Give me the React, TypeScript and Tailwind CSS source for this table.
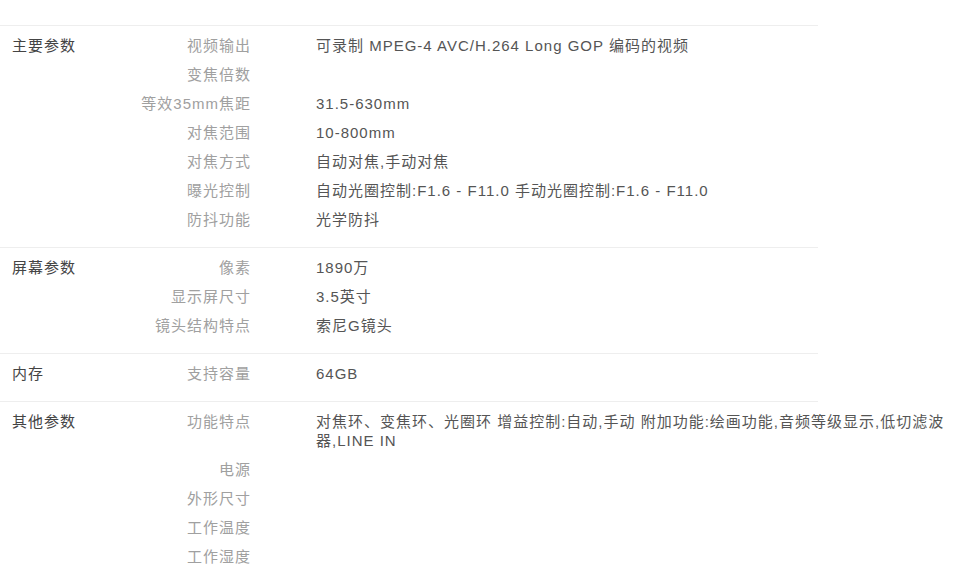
const specs = [
  {
    title: '主要参数',
    rows: [
      ['视频输出', '可录制 MPEG-4 AVC/H.264 Long GOP 编码的视频'],
      ['变焦倍数', ''],
      ['等效35mm焦距', '31.5-630mm'],
      ['对焦范围', '10-800mm'],
      ['对焦方式', '自动对焦,手动对焦'],
      ['曝光控制', '自动光圈控制:F1.6 - F11.0 手动光圈控制:F1.6 - F11.0'],
      ['防抖功能', '光学防抖'],
    ],
  },
  {
    title: '屏幕参数',
    rows: [
      ['像素', '1890万'],
      ['显示屏尺寸', '3.5英寸'],
      ['镜头结构特点', '索尼G镜头'],
    ],
  },
  {
    title: '内存',
    rows: [['支持容量', '64GB']],
  },
  {
    title: '其他参数',
    rows: [
      ['功能特点', '对焦环、变焦环、光圈环 增益控制:自动,手动 附加功能:绘画功能,音频等级显示,低切滤波器,LINE IN'],
      ['电源', ''],
      ['外形尺寸', ''],
      ['工作温度', ''],
      ['工作湿度', ''],
    ],
  },
];

const App: React.FC = () => {
  return (
    <div
      className="min-h-screen bg-white pt-[25px] text-[15px] leading-[19px] tracking-[1px]"
      style={{ fontFamily: '"Liberation Sans", "Noto Sans CJK SC", sans-serif' }}
    >
      <div className="w-[818px]">
        {specs.map((section) => (
          <div key={section.title} className="flex border-t border-[#eeeeee] pt-[5px] pb-[13px]">
            {/* section title */}
            <div className="w-[140px] shrink-0 py-[5px] pl-[12px] text-[#444444]">{section.title}</div>
            <div className="flex flex-col">
              {section.rows.map(([label, value]) => (
                <div key={label} className="flex py-[5px]">
                  <div className="w-[111px] shrink-0 text-right text-[#a0a0a0]">{label}</div>
                  <div className="ml-[65px] w-[635px] shrink-0 break-all text-[#555555]">{value}</div>
                </div>
              ))}
            </div>
          </div>
        ))}
      </div>
    </div>
  );
};

export default App;
